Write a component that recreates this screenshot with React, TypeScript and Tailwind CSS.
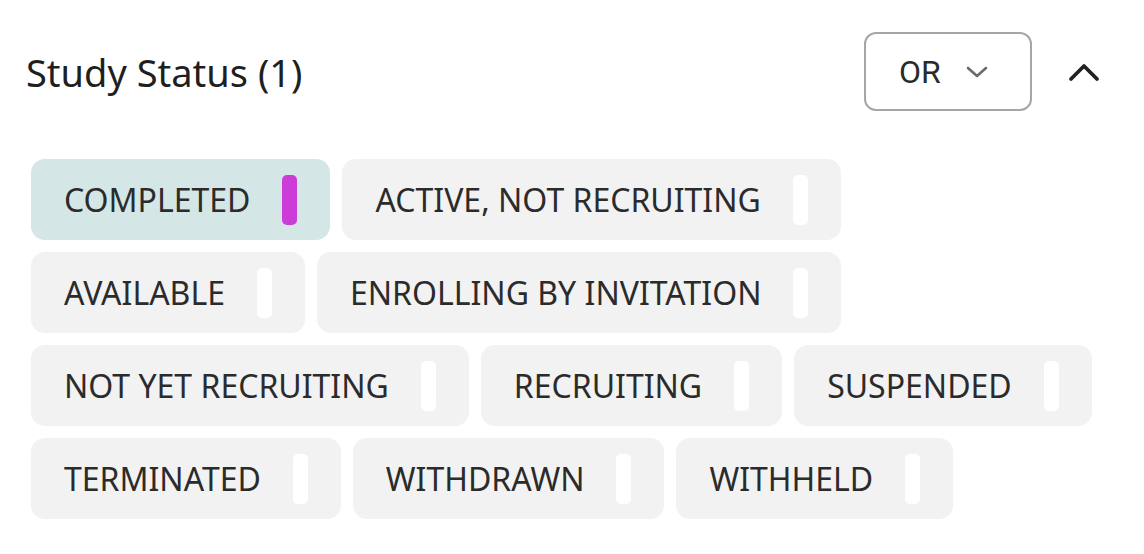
import React from 'react';

const statuses = [
  { label: 'COMPLETED', selected: true },
  { label: 'ACTIVE, NOT RECRUITING', selected: false },
  { label: 'AVAILABLE', selected: false },
  { label: 'ENROLLING BY INVITATION', selected: false },
  { label: 'NOT YET RECRUITING', selected: false },
  { label: 'RECRUITING', selected: false },
  { label: 'SUSPENDED', selected: false },
  { label: 'TERMINATED', selected: false },
  { label: 'WITHDRAWN', selected: false },
  { label: 'WITHHELD', selected: false },
];

const ChevronDown = () => (
  <svg width="24" height="14" viewBox="0 0 24 14" fill="none" className="text-[#6b6b6b]">
    <path d="M3 3 L12 11 L21 3" stroke="currentColor" strokeWidth="2.6" strokeLinecap="round" strokeLinejoin="round" />
  </svg>
);

const ChevronUp = () => (
  <svg width="32" height="20" viewBox="0 0 32 20" fill="none" className="text-[#222]">
    <path d="M3 17 L16 4 L29 17" stroke="currentColor" strokeWidth="3.8" strokeLinecap="round" strokeLinejoin="round" />
  </svg>
);

function StatusChip({ label, selected }: { label: string; selected: boolean }) {
  return (
    <button
      className={`flex items-center h-[81px] pl-[33px] pr-[33px] gap-[32px] rounded-[14px] ${
        selected ? 'bg-[#d4e6e6]' : 'bg-[#f2f2f2]'
      }`}
    >
      <span className="text-[32px] leading-none text-[#2b2b2b]">{label}</span>
      <span className={`w-[15px] h-[50px] rounded-[5px] ${selected ? 'bg-[#cc3cd8]' : 'bg-white'}`} />
    </button>
  );
}

export default function App() {
  return (
    <div className="w-[1144px] h-[554px] bg-white pt-[32px] pl-[26px] pr-[44px]" style={{ fontFamily: '"Noto Sans", sans-serif' }}>
      <div className="flex items-center justify-between h-[79px]">
        <h2 className="text-[38px] leading-none text-[#1f1f1f]">Study Status (1)</h2>
        <div className="flex items-center gap-[36px]">
          <button className="flex items-center w-[168px] h-[79px] pl-[33px] gap-[24px] border-2 border-[#a6a6a6] rounded-[12px]">
            <span className="text-[32px] leading-none text-[#2b2b2b]" style={{ fontFamily: 'Roboto, sans-serif' }}>OR</span>
            <ChevronDown />
          </button>
          <ChevronUp />
        </div>
      </div>
      <div className="flex flex-wrap gap-[12px] mt-[48px] pl-[5px]">
        {statuses.map((s) => (
          <StatusChip key={s.label} label={s.label} selected={s.selected} />
        ))}
      </div>
    </div>
  );
}
